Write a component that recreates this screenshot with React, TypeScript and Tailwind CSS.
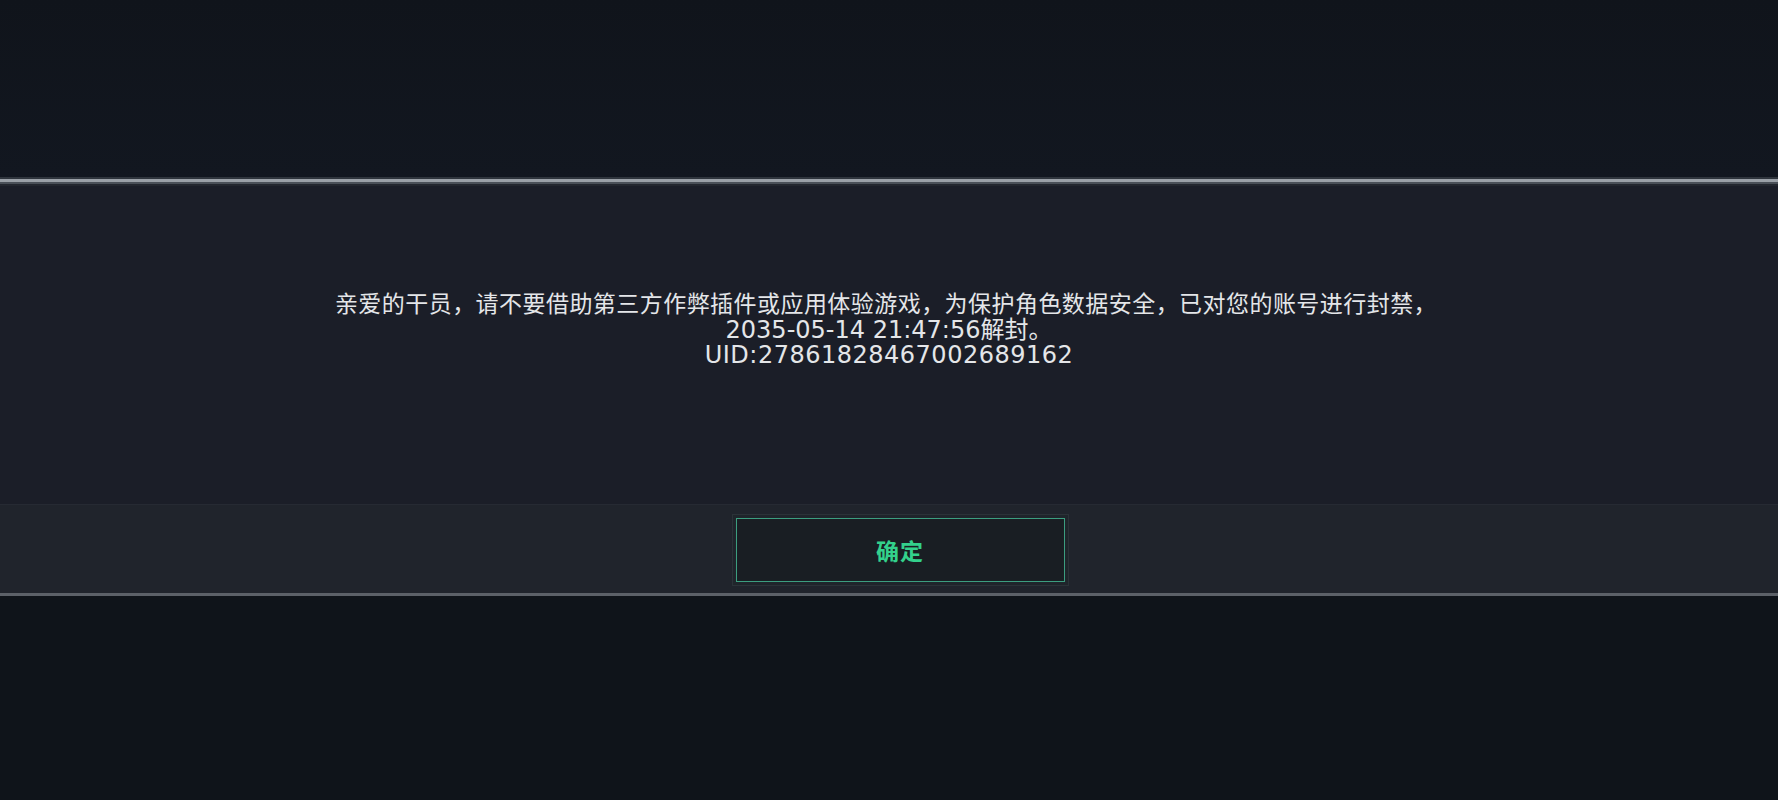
import React from 'react';

const FONT_STACK = '"DejaVu Sans", "Noto Sans CJK SC", sans-serif';

function NoticeText() {
  return (
    <div
      className="flex flex-col items-center text-[#e4e6e9] leading-[25.5px]"
      style={{ fontFamily: FONT_STACK }}
    >
      <p className="text-[23px] tracking-[0.45px] -ml-[6px]">
        亲爱的干员，请不要借助第三方作弊插件或应用体验游戏，为保护角色数据安全，已对您的账号进行封禁，
      </p>
      <p className="text-[24px]">2035-05-14 21:47:56解封。</p>
      <p className="text-[24px] tracking-[0.5px]">UID:27861828467002689162</p>
    </div>
  );
}

export default function App() {
  return (
    <div className="w-full h-[800px] bg-[#0f141b] flex flex-col overflow-hidden">
      {/* dimmed backdrop above the dialog */}
      <div className="h-[177px] bg-gradient-to-b from-[#10141b] to-[#121720]" />

      {/* metallic top edge of the dialog */}
      <div className="h-[2px] bg-[#2f353d]" />
      <div className="h-[3px] bg-[#9aa0a7]" />
      <div className="h-[2px] bg-[#4a5058]" />
      <div className="h-[2px] bg-[#23272f]" />

      {/* message body */}
      <div className="h-[318px] bg-[#1b1e28] pt-[106px]">
        <NoticeText />
      </div>

      {/* action bar */}
      <div className="h-[89px] bg-[#20242c] border-t border-[#262a33] flex justify-center pt-[13px]">
        <div className="ml-[22px] w-[329px] h-[64px] border-[1.5px] border-[#3c9e80] bg-[#191e23] flex items-center justify-center shadow-[0_0_0_3px_#1f252b,0_0_0_4px_#2b3238]">
          <span
            className="text-[23px] font-bold text-[#33d18c] tracking-[1px]"
            style={{ fontFamily: '"Noto Sans CJK SC", sans-serif' }}
          >
            确定
          </span>
        </div>
      </div>
      <div className="h-[3px] bg-[#5c6168]" />

      <div className="flex-1 bg-[#0f141a]" />
    </div>
  );
}
